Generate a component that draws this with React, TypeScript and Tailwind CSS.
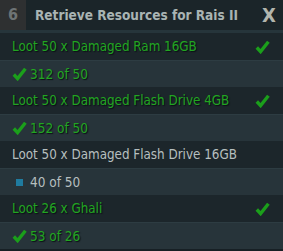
import React from "react";

const Check = ({ className = "" }: { className?: string }) => (
  <svg width="15" height="14" viewBox="0 0 15 14" className={className}>
    <path d="M1.8 7.5 L5.6 11.6 L13.4 1.8" fill="none" stroke="#1b9f1b" strokeWidth="3.4" strokeLinejoin="miter" />
  </svg>
);

type Row = { title: string; done: boolean; progress: string };

const rows: Row[] = [
  { title: "Loot 50 x Damaged Ram 16GB", done: true, progress: "312 of 50" },
  { title: "Loot 50 x Damaged Flash Drive 4GB", done: true, progress: "152 of 50" },
  { title: "Loot 50 x Damaged Flash Drive 16GB", done: false, progress: "40 of 50" },
  { title: "Loot 26 x Ghali", done: true, progress: "53 of 26" },
];

export default function App() {
  return (
    <div
      className="w-[283px] h-[251px] bg-[#172025] overflow-hidden flex flex-col"
      style={{ fontFamily: '"DejaVu Sans Condensed", "DejaVu Sans", Verdana, sans-serif', fontStretch: "condensed" }}
    >
      <div className="h-[30px] flex bg-[#1b2529] shrink-0">
        <div className="w-[26px] bg-[#2e3031] flex items-center justify-center text-[16px] font-bold text-[#6e7475]">
          6
        </div>
        <div className="flex-1 flex items-center pl-[9px] text-[13.5px] font-bold text-[#a9b4b3]">
          Retrieve Resources for Rais II
        </div>
        <div className="w-[30px] flex items-center justify-center pl-[2px] text-[20px] font-bold text-[#b2b5ad]">
          X
        </div>
      </div>
      <div className="h-[3px] bg-[#26353b] shrink-0" />
      {rows.map((r, i) => (
        <React.Fragment key={i}>
          <div
            className={`h-[27px] shrink-0 bg-[#1c262b] flex items-center pl-[12px] pr-[13px] text-[13.3px] ${
              r.done ? "text-[#22a522] [text-shadow:1px_1px_1px_#0b1114]" : "text-[#b6bfbf]"
            }`}
          >
            <span className="flex-1">{r.title}</span>
            {r.done && <Check />}
          </div>
          <div
            className={`h-[27px] shrink-0 bg-[#27343a] border-t border-[#2d3c42] flex items-center text-[13.5px] ${
              r.done ? "text-[#22a522] [text-shadow:1px_1px_1px_#0b1114] pl-[12px]" : "text-[#b6bfbf] pl-[16px]"
            }`}
          >
            {r.done ? (
              <Check className="mr-[3px]" />
            ) : (
              <span className="w-[7px] h-[7px] bg-[#1f7b9f] mr-[7px]" />
            )}
            <span>{r.progress}</span>
          </div>
        </React.Fragment>
      ))}
    </div>
  );
}
